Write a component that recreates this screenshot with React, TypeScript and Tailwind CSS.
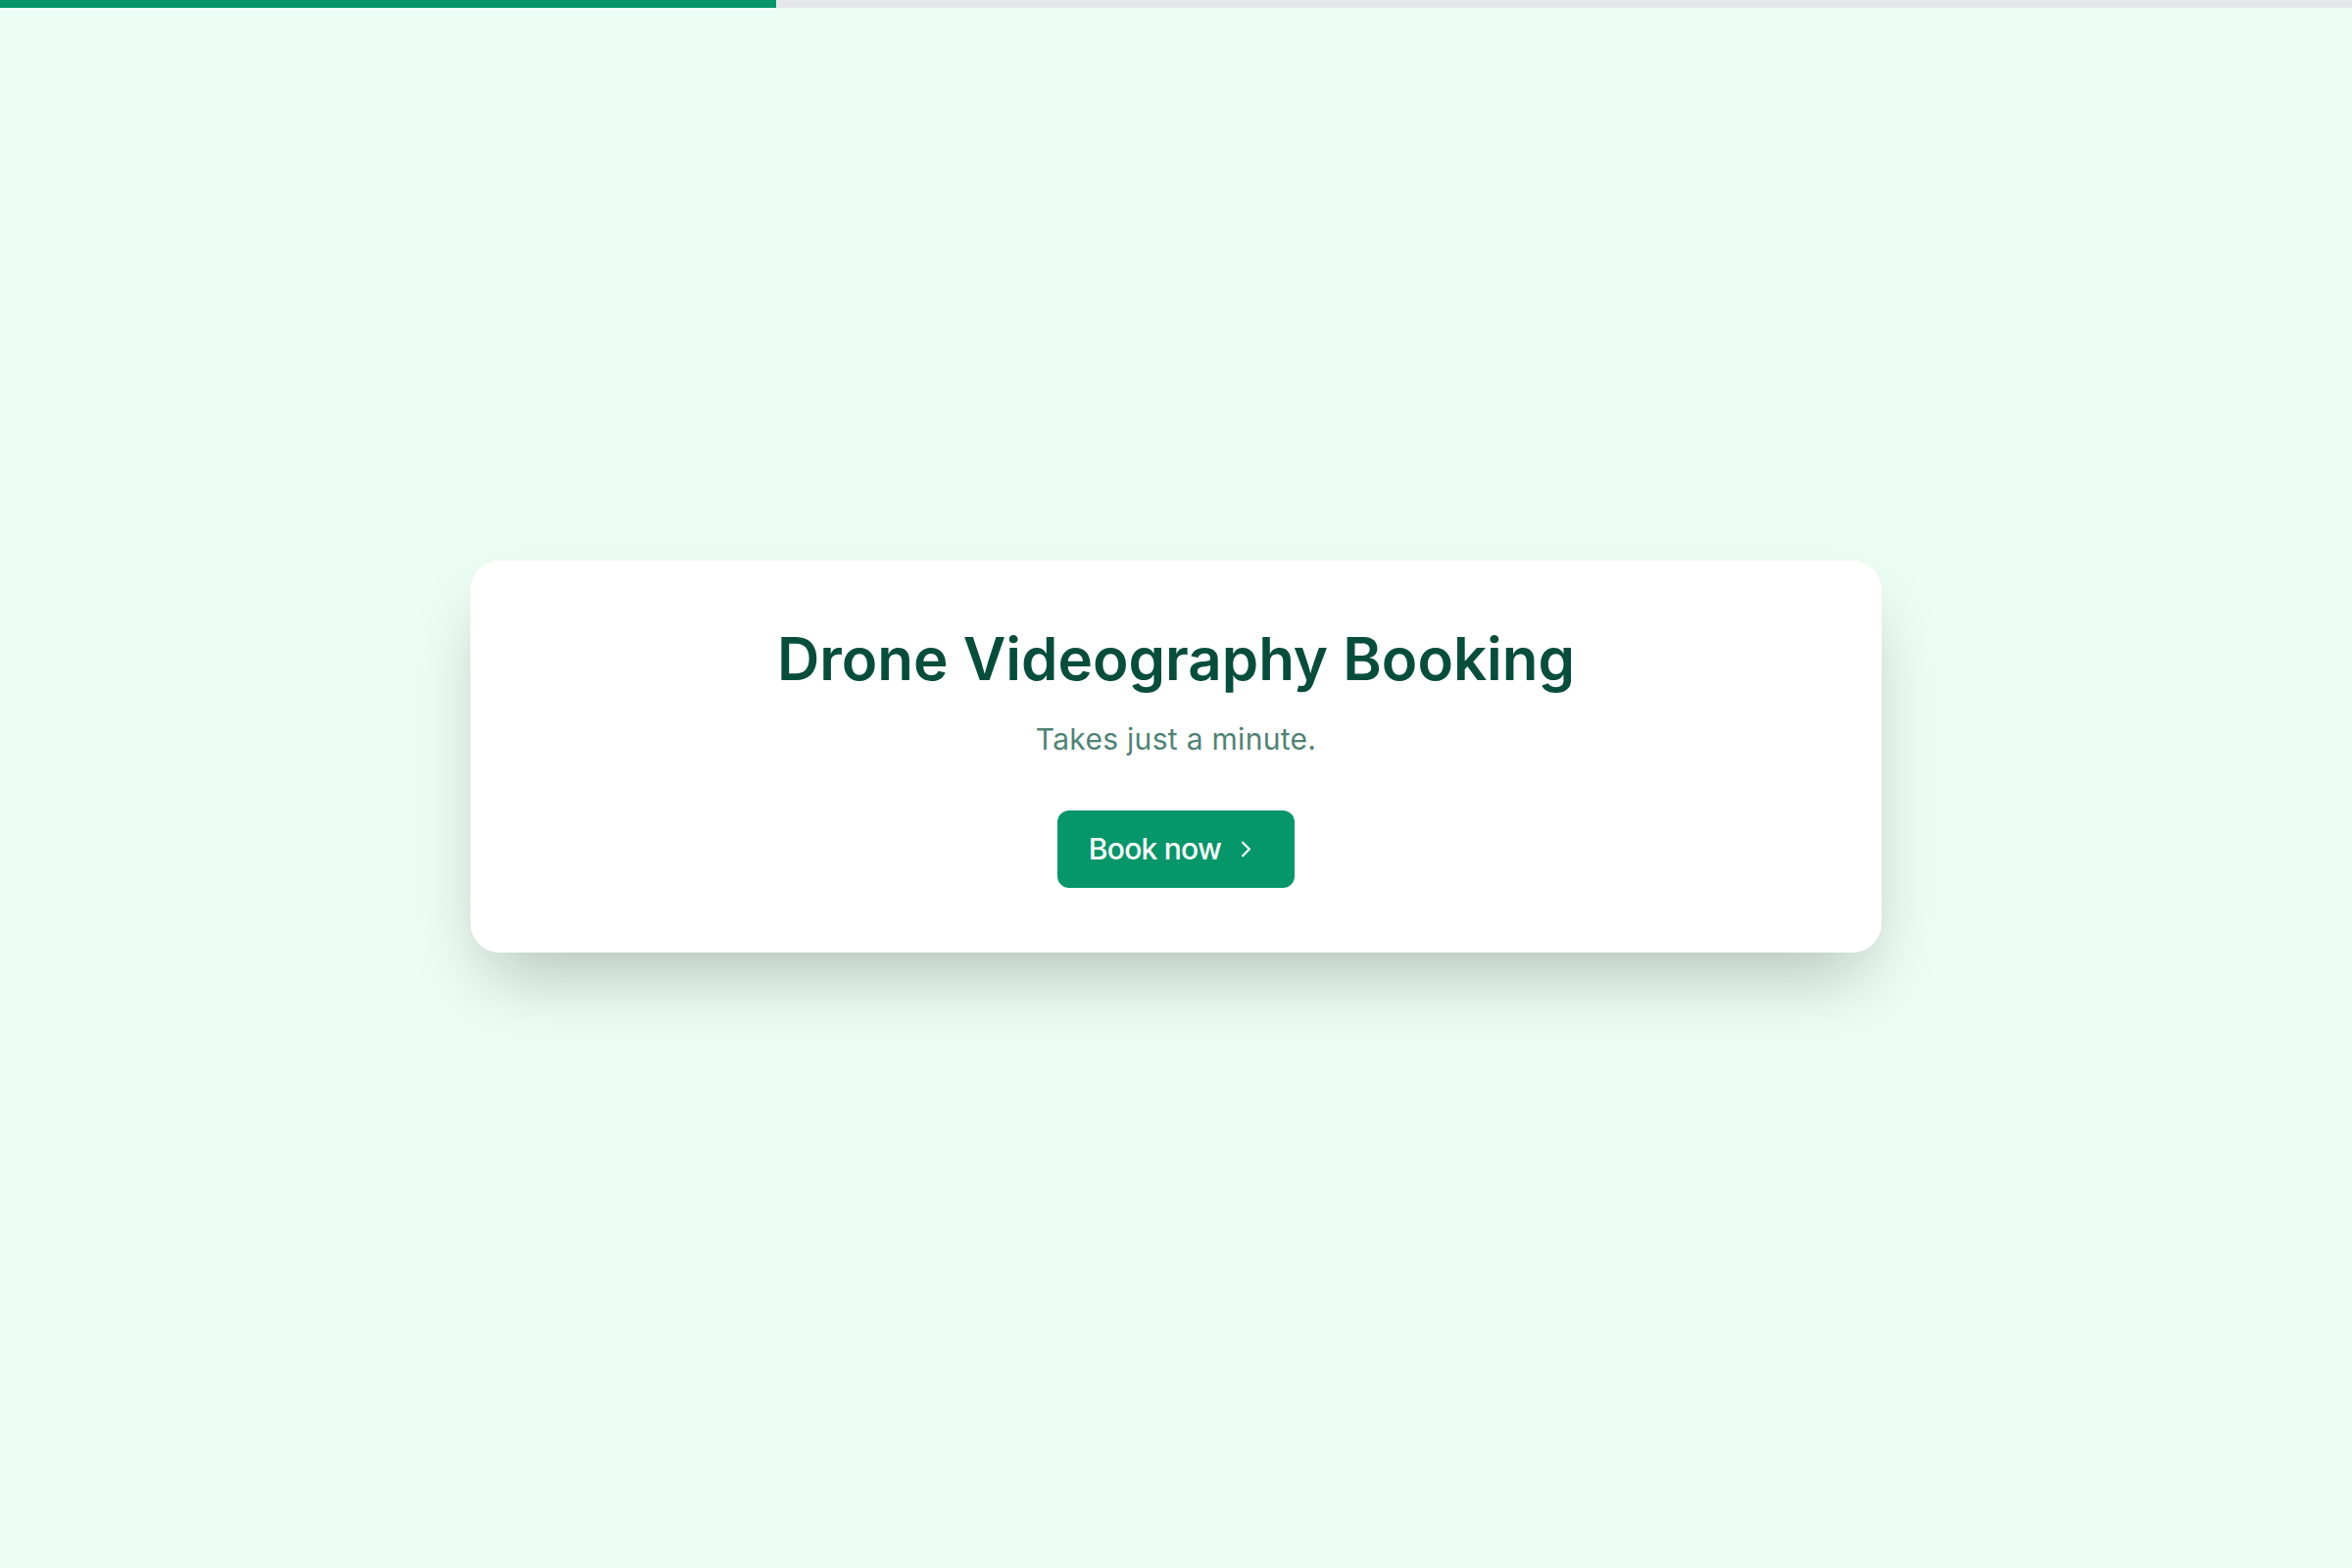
import React from 'react';
import { ChevronRight } from 'lucide-react';

const App: React.FC = () => {
  const progress = 33;

  return (
    <div className="min-h-screen bg-[#ecfdf5] font-['Inter','Noto_Sans',sans-serif]">
      {/* top progress bar */}
      <div className="h-[8px] w-full bg-gray-200">
        <div className="h-full bg-[#059669]" style={{ width: `${progress}%` }} />
      </div>

      <main className="flex justify-center pt-[564px]">
        <div className="w-[1440px] rounded-[30px] bg-white pt-[64px] pb-[66px] text-center shadow-[0_37px_75px_-18px_rgba(0,0,0,0.25)]">
          <h1 className="text-[60px] font-semibold leading-[72px] text-[#064e3b]">
            Drone Videography Booking
          </h1>
          <p className="mt-[24px] text-[30px] leading-[45px] tracking-[0.01em] text-[#508376]">
            Takes just a minute.
          </p>
          <div className="mt-[50px] flex justify-center">
            <button className="flex h-[79px] items-center gap-[12px] rounded-[12px] bg-[#059669] pl-[32px] pr-[36px] text-[30px] font-medium tracking-[-0.025em] text-white">
              <span>Book now</span>
              <ChevronRight size={27} strokeWidth={2} />
            </button>
          </div>
        </div>
      </main>
    </div>
  );
};

export default App;
